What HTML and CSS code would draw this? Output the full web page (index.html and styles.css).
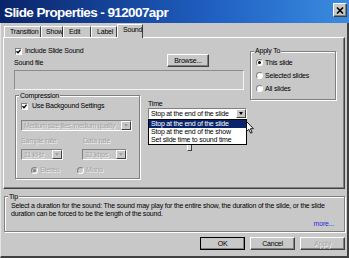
FILE: index.html
```html
<!DOCTYPE html>
<html lang="en">
<head>
  <meta charset="UTF-8">
  <title>Slide Properties - 912007apr</title>
  <link rel="stylesheet" href="styles.css">
</head>
<body>
<div class="dialog">
  <div class="titlebar">
    <span class="title">Slide Properties - 912007apr</span>
    <span class="close"><svg width="8" height="7" viewBox="0 0 8 7"><path d="M1 0.5 L7 6.5 M7 0.5 L1 6.5" stroke="#000" stroke-width="1.6"/></svg></span>
  </div>
  <div class="frame">
    <div class="tabs">
      <span class="tab tab-transition">Transition</span>
      <span class="tab tab-show">Show</span>
      <span class="tab tab-edit">Edit</span>
      <span class="tab tab-label">Label</span>
      <span class="tab tab-sound active">Sound</span>
    </div>

    <div class="page">
      <div class="main">
        <div class="file-row">
          <div class="file-labels">
            <div class="check"><span class="box"><svg width="5" height="5" viewBox="0 0 5 5"><path d="M0.5 2.2 L2 3.8 L4.6 0.8" fill="none" stroke="#000" stroke-width="1.3"/></svg></span>Include Slide Sound</div>
            <div class="caption">Sound file</div>
          </div>
          <span class="btn browse">Browse...</span>
        </div>
        <div class="filebox"></div>

        <div class="lower">
          <fieldset class="group compression">
            <legend>Compression</legend>
            <div class="group-body">
              <div class="check"><span class="box"><svg width="5" height="5" viewBox="0 0 5 5"><path d="M0.5 2.2 L2 3.8 L4.6 0.8" fill="none" stroke="#000" stroke-width="1.3"/></svg></span>Use Backgound Settings</div>
              <div class="combo off quality"><span class="value">Medium size files, medium quality</span><span class="drop"></span></div>
              <div class="rates">
                <div class="rate">
                  <div class="caption off">Sample rate</div>
                  <div class="combo off khz"><span class="value">11 kHz</span><span class="drop"></span></div>
                </div>
                <div class="rate">
                  <div class="caption off">Data rate</div>
                  <div class="combo off kbps"><span class="value">32 kbps</span><span class="drop"></span></div>
                </div>
              </div>
              <div class="channels">
                <span class="option stereo"><span class="radio off checked"></span><span class="off">Stereo</span></span>
                <span class="option"><span class="radio off"></span><span class="off">Mono</span></span>
              </div>
            </div>
          </fieldset>

          <div class="time">
            <div class="caption">Time</div>
            <div class="combo"><span class="value">Stop at the end of the slide</span><span class="drop"></span></div>
            <div class="slider"><span class="thumb"></span></div>
            <ul class="droplist">
              <li class="selected">Stop at the end of the slide</li>
              <li>Stop at the end of the show</li>
              <li>Set slide time to sound time</li>
            </ul>
            <svg class="cursor" width="8" height="13" viewBox="0 0 8 13"><path d="M0.5 0.5 L0.5 10.5 L2.8 8.3 L4.6 12.2 L6.2 11.5 L4.4 7.7 L7.4 7.7 Z" fill="#fff" stroke="#000" stroke-width="0.9" stroke-linejoin="round"/></svg>
          </div>
        </div>
      </div>

      <fieldset class="group apply-to">
        <legend>Apply To</legend>
        <div class="group-body">
          <div class="option"><span class="radio checked"></span>This slide</div>
          <div class="option"><span class="radio"></span>Selected slides</div>
          <div class="option"><span class="radio"></span>All slides</div>
        </div>
      </fieldset>
    </div>

    <fieldset class="group tip">
      <legend>Tip</legend>
      <div class="group-body">
        <p>Select a duration for the sound: The sound may play for the entire show, the duration of the slide, or the slide<br>duration can be forced to be the length of the sound.</p>
        <div class="more">more...</div>
      </div>
    </fieldset>

    <div class="buttons">
      <span class="btn default">OK</span>
      <span class="btn">Cancel</span>
      <span class="btn disabled">Apply</span>
    </div>
  </div>
</div>
</body>
</html>
```

FILE: styles.css
```css
* {
  box-sizing: border-box;
}
body {
  margin: 0;
  font-family: "Liberation Sans", Arial, sans-serif;
  font-size: 7px;
  line-height: 8px;
  letter-spacing: -0.2px;
  color: #000;
  background: #c8c8c8;
  white-space: nowrap;
}
.dialog {
  width: 349px;
  height: 258px;
  background: #c8c8c8;
}

/* title bar */
.titlebar {
  display: flex;
  justify-content: space-between;
  align-items: flex-start;
  height: 23px;
  padding: 0 2px 0 4px;
  background: linear-gradient(to right, #0a246a, #1f5fc0 60%, #3a8ce0);
}
.title {
  margin-top: 2px;
  line-height: 21px;
  font-size: 13.5px;
  font-weight: bold;
  letter-spacing: -0.6px;
  color: #fff;
}
.close {
  display: flex;
  align-items: center;
  justify-content: center;
  width: 14px;
  height: 14px;
  margin-top: 3px;
  background: #c8c8c8;
  border: 1px solid;
  border-color: #fff #404040 #404040 #fff;
  box-shadow: inset -1px -1px #808080;
}

.frame {
  height: 235px;
  padding: 1px 2px 6px 2px;
  border-left: 1px solid #e4e4e4;
  border-right: 2px solid #404040;
  border-bottom: 2px solid #404040;
}

/* tabs */
.tabs {
  display: flex;
  align-items: flex-end;
  height: 13px;
  padding-left: 1px;
}
.tab {
  position: relative;
  height: 11px;
  padding-left: 5px;
  line-height: 10px;
  border: 1px solid;
  border-bottom: 0;
  border-color: #fff #404040 transparent #fff;
}
.tab-transition { width: 37px; }
.tab-show { width: 22px; padding-left: 4px; }
.tab-edit { width: 28px; }
.tab-label { width: 26px; }
.tab-sound { width: 26px; }
.tab.active {
  height: 14px;
  margin-bottom: -1px;
  background: #c8c8c8;
  z-index: 1;
}

/* tab page */
.page {
  display: grid;
  grid-template-columns: 233px 86px;
  column-gap: 3px;
  align-items: start;
  height: 152px;
  padding: 8px 0 0 10px;
  border: 1px solid;
  border-color: #fff #404040 #404040 #fff;
  box-shadow: inset -1px -1px #808080;
}
.file-row {
  display: flex;
  align-items: flex-end;
  height: 21px;
}
.file-labels {
  width: 153px;
}
.file-labels .check {
  padding-left: 1px;
}
.file-labels .caption {
  margin-top: 4px;
}
.check {
  display: flex;
  align-items: center;
  gap: 3px;
  height: 8px;
}
.box {
  display: flex;
  align-items: center;
  justify-content: center;
  width: 7px;
  height: 7px;
  background: #fff;
  border: 1px solid;
  border-color: #808080 #fff #fff #808080;
}
.filebox {
  width: 230px;
  height: 20px;
  margin-top: 3px;
  border: 1px solid;
  border-color: #8c8c8c #f4f4f4 #f4f4f4 #8c8c8c;
}
.lower {
  display: flex;
  margin-top: 2px;
}

/* group boxes */
.group {
  margin: 0;
  padding: 0;
  min-width: 0;
  border: 1px solid #808080;
  box-shadow: inset 1px 1px #fff, 1px 1px #fff;
}
.group legend {
  margin-left: 3px;
  padding: 0 1px;
  line-height: 7px;
  background: #c8c8c8;
}
.compression {
  width: 125px;
  margin-left: 1px;
}
.compression .group-body {
  padding: 3px 0 4px 5px;
}
.compression .check {
  gap: 4px;
}
.quality {
  width: 111px;
  margin-top: 10px;
}
.quality .value {
  letter-spacing: -0.42px;
}
.rates {
  display: grid;
  grid-template-columns: 62px 50px;
  margin-top: 6px;
}
.rate .combo {
  margin-top: 4px;
}
.khz {
  width: 42px;
}
.kbps {
  width: 45px;
  margin-left: -1px;
}
.channels {
  display: flex;
  margin-top: 6px;
  padding-left: 10px;
}
.option {
  display: flex;
  align-items: center;
  gap: 2px;
}
.stereo {
  width: 46px;
}
.radio {
  display: flex;
  align-items: center;
  justify-content: center;
  width: 7px;
  height: 7px;
  border-radius: 50%;
  background: #fff;
  border: 1px solid;
  border-color: #808080 #fff #fff #808080;
}
.radio.checked::after {
  content: "";
  width: 3px;
  height: 3px;
  border-radius: 50%;
  background: #000;
}
.radio.off {
  background: #c8c8c8;
}
.radio.off.checked::after {
  background: #808080;
}
.off {
  color: #a6a6a6;
  text-shadow: 1px 1px #f0f0f0;
}

/* combo boxes */
.combo {
  display: flex;
  height: 11px;
  background: #fff;
  border: 1px solid;
  border-color: #808080 #fff #fff #808080;
}
.combo .value {
  flex: 1;
  padding-left: 2px;
  line-height: 9px;
  overflow: hidden;
}
.combo .drop {
  display: flex;
  align-items: center;
  justify-content: center;
  width: 10px;
  background: #c8c8c8;
  border: 1px solid;
  border-color: #fff #404040 #404040 #fff;
}
.combo .drop::after {
  content: "";
  border-left: 2.5px solid transparent;
  border-right: 2.5px solid transparent;
  border-top: 3px solid #000;
}
.combo.off {
  background: #c8c8c8;
}
.combo.off .drop::after {
  border-top-color: #a0a0a0;
}

/* time */
.time {
  position: relative;
  width: 99px;
  margin-left: 8px;
}
.time .caption {
  margin-top: 8px;
}
.slider {
  height: 7px;
  margin-top: 25px;
  padding-left: 39px;
}
.thumb {
  display: block;
  width: 5px;
  height: 7px;
  background: #d8d8d8;
  border: 1px solid;
  border-color: #fff #404040 #404040 #fff;
}
.droplist {
  position: absolute;
  top: 27px;
  left: 0;
  width: 99px;
  margin: 0;
  padding: 0;
  list-style: none;
  background: #fff;
  border: 1px solid #000;
  z-index: 2;
}
.droplist li {
  height: 8px;
  padding-left: 2px;
  line-height: 8px;
}
.droplist .selected {
  background: #0a246a;
  color: #fff;
}
.cursor {
  position: absolute;
  top: 29px;
  left: 98px;
  z-index: 3;
}

/* apply to */
.apply-to {
  margin-top: 1px;
}
.apply-to legend {
  line-height: 8px;
}
.apply-to .group-body {
  padding: 1px 0 4px 5px;
}
.apply-to .option {
  height: 13px;
}

/* tip */
.tip {
  margin: 4px 0 0 1px;
}
.tip .group-body {
  padding: 2px 10px 3px 6px;
}
.tip p {
  margin: 0;
}
.more {
  margin-top: 2px;
  text-align: right;
  color: #2b2bd8;
}

/* buttons */
.buttons {
  display: flex;
  justify-content: flex-end;
  gap: 5px;
  margin-top: 5px;
}
.btn {
  display: flex;
  align-items: center;
  justify-content: center;
  width: 45px;
  height: 13px;
  background: #c8c8c8;
  border: 1px solid;
  border-color: #fff #404040 #404040 #fff;
  box-shadow: inset -1px -1px #808080;
}
.browse {
  width: 42px;
}
.btn.default {
  outline: 1px solid #000;
  outline-offset: -1px;
}
.btn.disabled {
  color: #a6a6a6;
  text-shadow: 1px 1px #f0f0f0;
}
```
